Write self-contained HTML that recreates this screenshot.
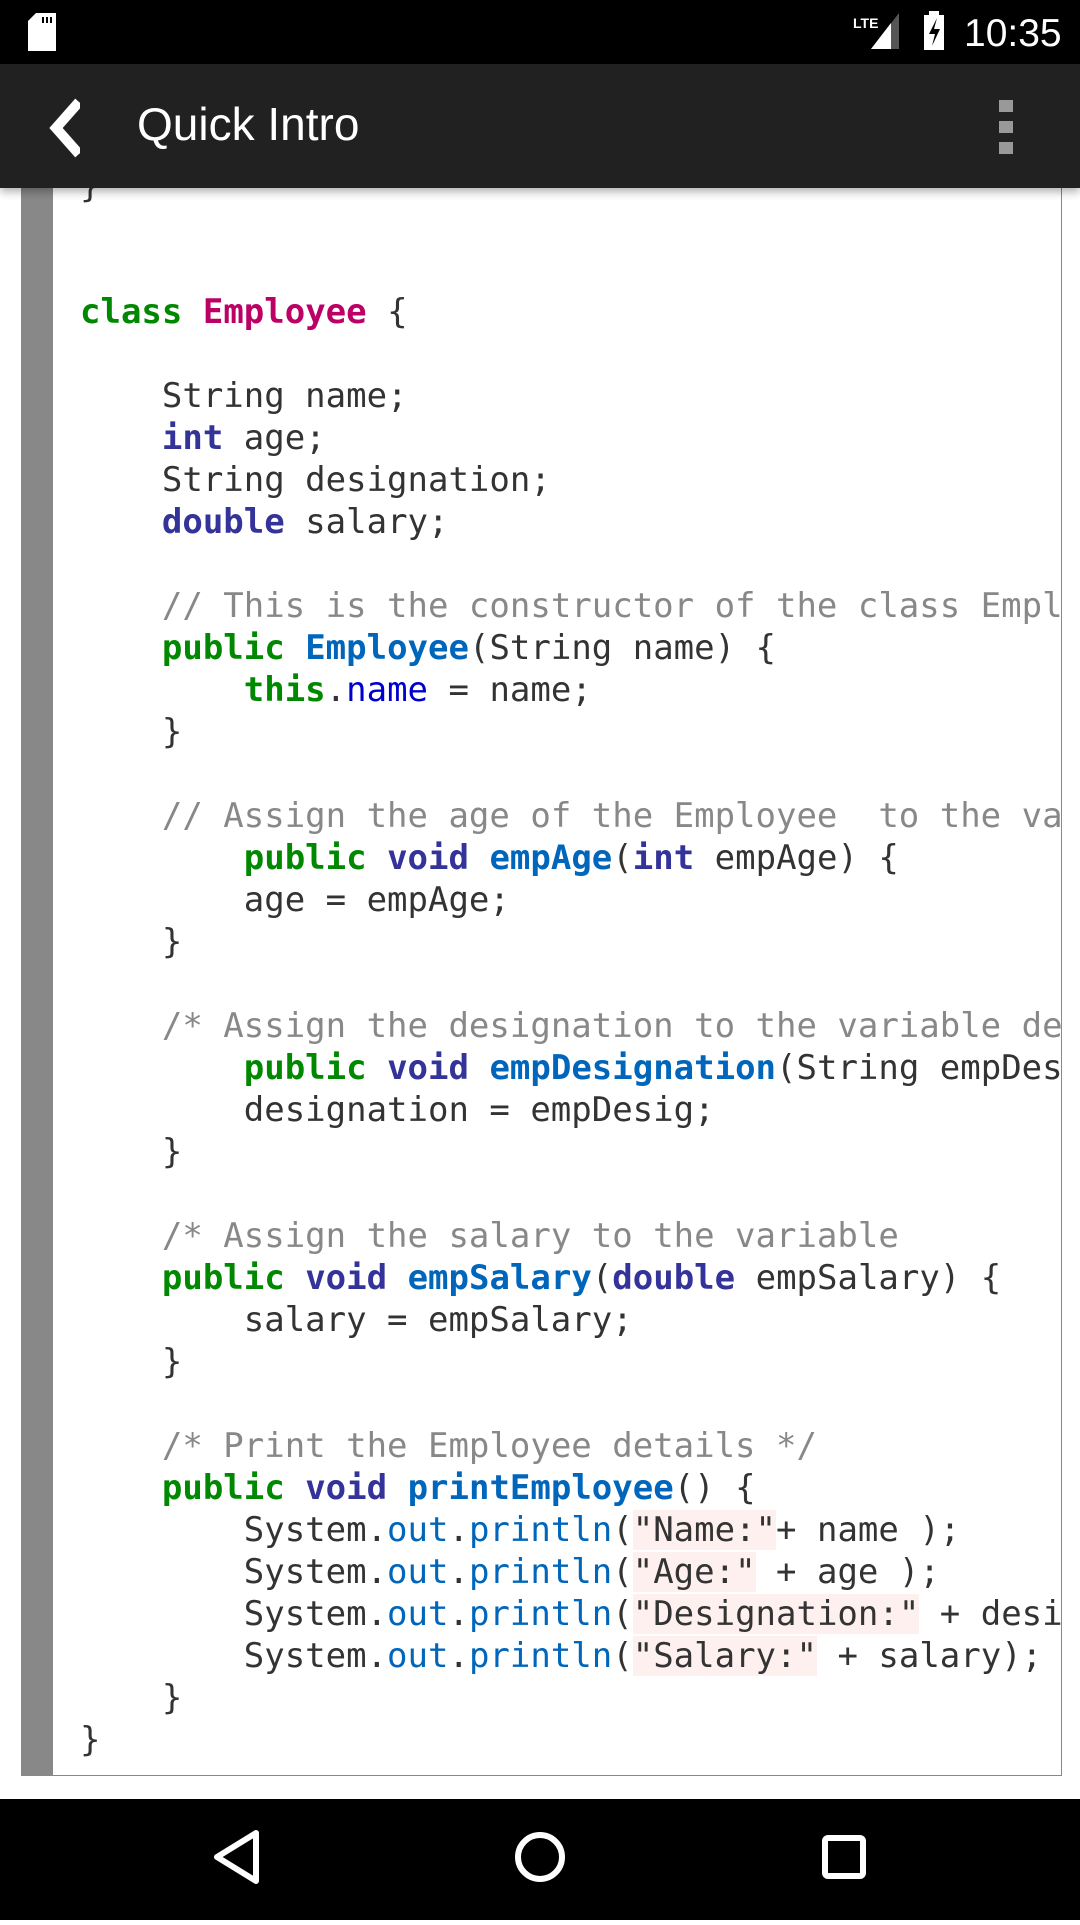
<!DOCTYPE html><html><head><meta charset="utf-8"><style>
body{margin:0;width:1080px;height:1920px;background:#fff;position:relative;overflow:hidden;font-family:"Liberation Sans",sans-serif}
.box{position:absolute;left:21px;top:150px;width:1040px;height:1625px;border:1px solid #888;border-top:none;border-left:none;overflow:hidden;background:#fff}
.bar{position:absolute;left:0;top:0;width:32px;height:100%;background:#888}
pre{position:absolute;left:59px;top:15px;margin:0;font-family:"DejaVu Sans Mono",monospace;font-size:34px;line-height:42px;color:#333;white-space:pre}
.k{color:#008800;font-weight:bold}.t{color:#333399;font-weight:bold}.f{color:#0066bb;font-weight:bold}.c{color:#bb0066;font-weight:bold}
.v{color:#0000cc}.o{color:#0066bb}.m{color:#888}.s{background:#fff0f0;color:#333}
.sb{position:absolute;left:0;top:0;width:1080px;height:64px;background:#000}
.ab{position:absolute;left:0;top:64px;width:1080px;height:124px;background:#212121;box-shadow:0 4px 8px rgba(0,0,0,.3)}
.nav{position:absolute;left:0;top:1799px;width:1080px;height:121px;background:#000}
</style></head><body>
<div class="box"><div class="bar"></div><pre>}


<span class="k">class</span> <span class="c">Employee</span> {

    String name;
    <span class="t">int</span> age;
    String designation;
    <span class="t">double</span> salary;

    <span class="m">// This is the constructor of the class Employee</span>
    <span class="k">public</span> <span class="f">Employee</span>(String name) {
        <span class="k">this</span>.<span class="v">name</span> = name;
    }

    <span class="m">// Assign the age of the Employee  to the variable age.</span>
        <span class="k">public</span> <span class="t">void</span> <span class="f">empAge</span>(<span class="t">int</span> empAge) {
        age = empAge;
    }

    <span class="m">/* Assign the designation to the variable designation.*/</span>
        <span class="k">public</span> <span class="t">void</span> <span class="f">empDesignation</span>(String empDesig) {
        designation = empDesig;
    }

    <span class="m">/* Assign the salary to the variable</span>
    <span class="k">public</span> <span class="t">void</span> <span class="f">empSalary</span>(<span class="t">double</span> empSalary) {
        salary = empSalary;
    }

    <span class="m">/* Print the Employee details */</span>
    <span class="k">public</span> <span class="t">void</span> <span class="f">printEmployee</span>() {
        System.<span class="o">out</span>.<span class="o">println</span>(<span class="s">"Name:"</span>+ name );
        System.<span class="o">out</span>.<span class="o">println</span>(<span class="s">"Age:"</span> + age );
        System.<span class="o">out</span>.<span class="o">println</span>(<span class="s">"Designation:"</span> + designation );
        System.<span class="o">out</span>.<span class="o">println</span>(<span class="s">"Salary:"</span> + salary);
    }
}</pre></div>
<div class="sb">
<svg width="1080" height="64" style="position:absolute;left:0;top:0">
<path d="M36 13h20v38h-28v-30z" fill="#fff"/><rect x="42" y="17" width="2" height="6" fill="#000"/><rect x="46" y="17" width="2" height="6" fill="#000"/><rect x="50" y="17" width="2" height="6" fill="#000"/>
<text x="853" y="28" fill="#fff" font-size="14" font-family="Liberation Sans" font-weight="bold">LTE</text>
<path d="M871 49h28v-36z" fill="#555"/><path d="M871 49h20v-26z" fill="#fff"/>
<rect x="924" y="15" width="20" height="35" fill="#fff"/><rect x="929" y="11" width="10" height="5" fill="#fff"/><path d="M937 18l-8 16h6l-3 12 8-17h-6z" fill="#000"/>
<text x="964" y="46" fill="#fff" font-size="39" font-family="Liberation Sans">10:35</text>
</svg></div>
<div class="ab">
<svg width="80" height="124" style="position:absolute;left:0;top:0"><path d="M79 38l-23 26 23 26" stroke="#fff" stroke-width="10" fill="none"/></svg>
<div style="position:absolute;left:137px;top:33px;color:#fff;font-size:46px">Quick Intro</div>
<div style="position:absolute;left:999px;top:36px;width:14px;height:12px;background:#999;box-shadow:0 21px 0 #999,0 42px 0 #999"></div>
</div>
<div class="nav"><svg width="1080" height="121">
<path d="M256 34v48l-39-24z" stroke="#fff" stroke-width="6" fill="none" stroke-linejoin="round"/>
<circle cx="540" cy="58" r="22" stroke="#fff" stroke-width="6" fill="none"/>
<rect x="825" y="39" width="38" height="38" rx="3" stroke="#fff" stroke-width="6" fill="none"/>
</svg></div>
</body></html>
